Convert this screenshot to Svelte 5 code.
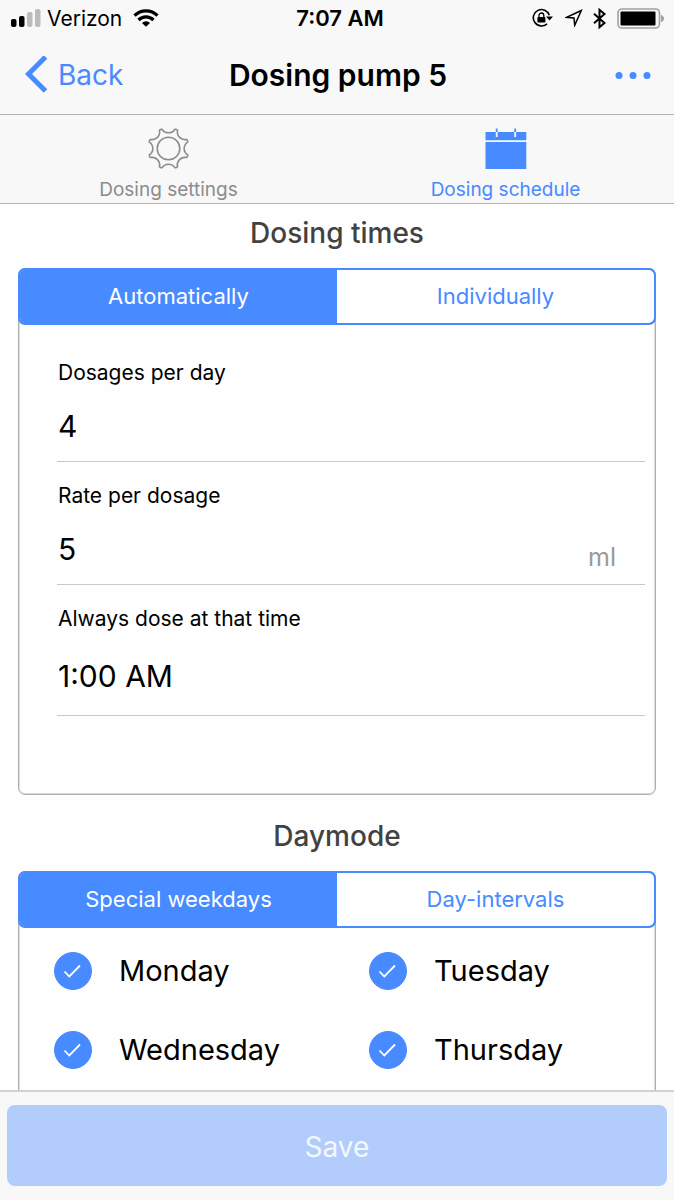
<script>
  let timesMode = $state('Automatically');
  let dayMode = $state('Special weekdays');
  let dosages = $state('4');
  let rate = $state('5');
  let time = $state('1:00 AM');
  let days = $state([
    { name: 'Monday', on: true },
    { name: 'Tuesday', on: true },
    { name: 'Wednesday', on: true },
    { name: 'Thursday', on: true }
  ]);

  const point = (deg, r) => {
    const a = (deg * Math.PI) / 180;
    return `${(20.5 + r * Math.cos(a)).toFixed(2)} ${(20.5 + r * Math.sin(a)).toFixed(2)}`;
  };

  // Eight blunt teeth joined by concave arcs.
  let gear = '';
  for (let i = 0; i < 8; i++) {
    const a = i * 45 + 22.5;
    gear += i === 0 ? `M${point(a - 4, 20.3)}` : `A7.6 7.6 0 0 0 ${point(a - 4, 20.3)}`;
    gear += `Q${point(a, 21)} ${point(a + 4, 20.3)}`;
  }
  gear += `A7.6 7.6 0 0 0 ${point(18.5, 20.3)}Z`;
</script>

{#snippet segment(label, options, value, pick)}
  <div class="segment" role="group" aria-label={label}>
    {#each options as option}
      <button type="button" class:active={value === option} aria-pressed={value === option} onclick={() => pick(option)}>{option}</button>
    {/each}
  </div>
{/snippet}

<div class="screen">
  <header>
    <div class="status">
      <div class="side">
        <svg width="31" height="18" viewBox="0 0 31 18" aria-hidden="true">
          <rect x="1" y="10" width="5.500" height="8" rx="2" />
          <rect x="9" y="7" width="5.500" height="11" rx="2" />
          <rect x="17" y="3" width="5.500" height="15" rx="2" fill="#bbb" />
          <rect x="25" y="0" width="5.500" height="18" rx="2" fill="#bbb" />
        </svg>
        <span class="carrier">Verizon</span>
        <svg width="26" height="18" viewBox="0 0 26 18" fill="none" stroke="#000" stroke-width="3.200" aria-hidden="true">
          <path d="M1.5 6.600a16.400 16.400 0 0 1 23 0" />
          <path d="M5.500 11a10.600 10.600 0 0 1 15 0" />
          <path d="M13 17.800l-4-3.800a5.600 5.600 0 0 1 8 0z" fill="#000" stroke="none" />
        </svg>
      </div>
      <time>7:07 AM</time>
      <div class="side right">
        <svg width="21" height="20" viewBox="0 0 21 20" fill="none" stroke="#000" stroke-width="1.600" aria-hidden="true">
          <path d="M17.300 7.200A8.200 8.200 0 1 0 15 15.800" />
          <path d="M14 8.600h7l-3.500 4z" fill="#000" stroke="none" />
          <rect x="5.400" y="9" width="8" height="5.600" rx="1" fill="#000" stroke="none" />
          <path d="M7 9.500V7.400a2.400 2.400 0 0 1 4.800 0v2.100" stroke-width="1.300" />
        </svg>
        <svg class="arrow" width="18" height="18" viewBox="0 0 18 18" fill="none" stroke="#000" stroke-width="1.500" aria-hidden="true">
          <path d="M16.300 1.500L1.700 8.300l7.300.7.700 7.300z" />
        </svg>
        <svg class="bluetooth" width="13" height="21" viewBox="0 0 13 21" fill="none" stroke="#000" stroke-width="2" aria-hidden="true">
          <path d="M1 5.700l10.500 9.300-5 4.200V1.800l5 4.200L1 15.300" />
        </svg>
        <svg width="47" height="21" viewBox="0 0 47 21" aria-hidden="true">
          <rect x="1" y="1" width="41.500" height="19" rx="4" fill="none" stroke="#a0a0a0" stroke-width="1.600" />
          <rect x="3.500" y="3.500" width="35" height="14" rx="1" />
          <path d="M44 7q3 1 3 3.500T44 14z" fill="#a0a0a0" />
        </svg>
      </div>
    </div>
    <div class="navbar">
      <button type="button" class="back">
        <svg width="23" height="38" viewBox="0 0 23 38" fill="none" stroke="currentColor" stroke-width="5" aria-hidden="true">
          <path d="M20.500 1L3.500 18l17 17" />
        </svg>
        Back
      </button>
      <h1>Dosing pump 5</h1>
      <button type="button" class="more" aria-label="More">
        <svg width="36" height="8" viewBox="0 0 36 8" fill="currentColor" aria-hidden="true">
          <circle cx="4" cy="4.500" r="3.500" /><circle cx="18" cy="4.500" r="3.500" /><circle cx="32" cy="4.500" r="3.500" />
        </svg>
      </button>
    </div>
  </header>

  <nav>
    <a href="#settings">
      <svg width="42" height="42" viewBox="0 0 42 42" fill="none" stroke="currentColor" stroke-width="1.600" stroke-linejoin="round" aria-hidden="true">
        <path d={gear} />
        <circle cx="20.500" cy="20.500" r="11.300" />
      </svg>
      <span>Dosing settings</span>
    </a>
    <a href="#schedule" class="current" aria-current="page">
      <svg width="42" height="42" viewBox="0 0 42 42" fill="currentColor" aria-hidden="true">
        <path d="M0.500 4H10.800v5h1.800V4H29.300v5h1.800V4H41.300v8.300H.5zM.5 14h40.800v27H.5z" />
        <path d="M10.800.5h1.800V4h-1.800zM29.300.5h1.800V4h-1.800z" />
      </svg>
      <span>Dosing schedule</span>
    </a>
  </nav>

  <main>
    <h2>Dosing times</h2>
    <section class="card times">
      {@render segment('Dosing times', ['Automatically', 'Individually'], timesMode, (v) => (timesMode = v))}
      <div class="fields">
        <div class="field">
          <label for="dosages">Dosages per day</label>
          <div class="entry"><input id="dosages" type="text" inputmode="numeric" bind:value={dosages} /></div>
        </div>
        <div class="field">
          <label for="rate">Rate per dosage</label>
          <div class="entry">
            <input id="rate" type="text" inputmode="numeric" bind:value={rate} />
            <span class="unit">ml</span>
          </div>
        </div>
        <div class="field tall">
          <label for="time">Always dose at that time</label>
          <div class="entry"><input id="time" type="text" bind:value={time} /></div>
        </div>
      </div>
    </section>

    <h2>Daymode</h2>
    <section class="card">
      {@render segment('Daymode', ['Special weekdays', 'Day-intervals'], dayMode, (v) => (dayMode = v))}
      <div class="days">
        {#each days as day}
          <label class="day">
            <span class="check">
              <input type="checkbox" bind:checked={day.on} />
              <svg width="38" height="38" viewBox="0 0 38 38" fill="none" stroke="#fff" stroke-width="1.800" aria-hidden="true">
                <path d="M10.500 19.500l4.800 5L26 13.500" />
              </svg>
            </span>
            {day.name}
          </label>
        {/each}
      </div>
    </section>
  </main>

  <footer>
    <button type="button" class="save" disabled>Save</button>
  </footer>
</div>

<style>
  :global(body) {
    margin: 0;
  }
  .screen {
    --blue: #488aff;
    --bar: #f8f8f8;
    display: flex;
    flex-direction: column;
    height: 100vh;
    overflow: hidden;
    background: #fefefe;
    color: #000;
    font-family: Inter, sans-serif;
  }
  .screen * {
    box-sizing: border-box;
  }
  button,
  input {
    margin: 0;
    padding: 0;
    border: 0;
    background: none;
    color: inherit;
    font: inherit;
  }
  svg {
    display: block;
    flex: none;
  }
  header {
    background: var(--bar);
    border-bottom: 1px solid #b2b2b2;
  }
  .status {
    display: grid;
    grid-template-columns: 1fr auto 1fr;
    align-items: center;
    height: 36px;
    padding: 0 10px;
    font-size: 21px;
  }
  time {
    padding-left: 6px;
    font-size: 22px;
    font-weight: 600;
  }
  .side {
    display: flex;
    align-items: center;
  }
  .carrier {
    margin: 0 11px 0 6px;
  }
  .right {
    justify-content: flex-end;
  }
  .arrow {
    margin-left: 12px;
  }
  .bluetooth {
    margin: 0 11px 0 10px;
  }
  .navbar {
    display: grid;
    grid-template-columns: 1fr auto 1fr;
    align-items: center;
    height: 78px;
    padding: 0 23px 0 25px;
  }
  .back {
    display: flex;
    align-items: center;
    gap: 10px;
    justify-self: start;
    color: var(--blue);
    font-size: 28px;
  }
  h1 {
    margin: 0;
    font-size: 30px;
    font-weight: 600;
  }
  .more {
    justify-self: end;
    color: var(--blue);
  }
  nav {
    display: flex;
    background: var(--bar);
    border-bottom: 1px solid #b2b2b2;
  }
  nav a {
    flex: 1;
    display: flex;
    flex-direction: column;
    align-items: center;
    gap: 8px;
    height: 88px;
    padding-top: 13px;
    color: #8c8c8c;
    font-size: 19px;
    line-height: 24px;
    text-decoration: none;
  }
  nav .current {
    color: var(--blue);
  }
  main {
    flex: 1;
    min-height: 0;
    overflow-y: auto;
    scrollbar-width: none;
    padding: 0 18px;
  }
  h2 {
    margin: 0;
    padding-bottom: 6px;
    color: #424242;
    font-size: 28px;
    font-weight: 500;
    line-height: 58px;
    text-align: center;
  }
  .card {
    margin-bottom: 12px;
    padding: 1px;
    border: 1px solid #b0b0b0;
    border-radius: 7px;
    box-shadow: inset 0 0 0 1px #dcdcdc;
  }
  .times {
    padding-bottom: 78px;
  }
  .segment {
    display: flex;
    height: 57px;
    margin: -2px;
    overflow: hidden;
    border: 2px solid var(--blue);
    border-radius: 7px;
    background: linear-gradient(#fff, #fff) padding-box, var(--blue);
  }
  .segment button {
    flex: 1;
    padding-bottom: 2px;
    color: var(--blue);
    font-size: 22px;
  }
  .segment .active {
    background: var(--blue);
    color: #fff;
  }
  .fields {
    padding: 16px 9px 0 37px;
  }
  .field {
    padding-top: 21px;
    border-bottom: 1px solid #c8c7cc;
  }
  .field label {
    display: block;
    margin-bottom: 7px;
    padding-left: 1px;
    font-size: 21px;
    line-height: 26px;
  }
  .entry {
    display: flex;
    align-items: center;
    height: 68px;
    padding-left: 1px;
  }
  .tall .entry {
    height: 76px;
  }
  .entry input {
    flex: 1;
    min-width: 0;
    height: 100%;
    padding-bottom: 2px;
    font-size: 30px;
    outline: none;
  }
  .unit {
    padding: 14px 29px 0 0;
    color: #999;
    font-size: 25px;
  }
  .days {
    display: grid;
    grid-template-columns: 1fr 1fr;
    grid-auto-rows: 79px;
    padding: 5px 4px 28px 0;
  }
  .day {
    display: flex;
    align-items: center;
    gap: 27px;
    padding-left: 34px;
    font-size: 29px;
  }
  .check {
    display: grid;
  }
  .check > * {
    grid-area: 1 / 1;
  }
  .check input {
    width: 38px;
    height: 38px;
    appearance: none;
    border: 1px solid #c8c7cc;
    border-radius: 50%;
  }
  .check input:checked {
    border-color: var(--blue);
    background: var(--blue);
  }
  .check svg {
    pointer-events: none;
  }
  footer {
    padding: 13px 7px 14px;
    border-top: 2px solid #d2d2d2;
    background: var(--bar);
  }
  .save {
    width: 100%;
    height: 81px;
    padding-top: 2px;
    border-radius: 8px;
    background: #b2ccfb;
    color: #f4f7fe;
    font-size: 28px;
  }
</style>
